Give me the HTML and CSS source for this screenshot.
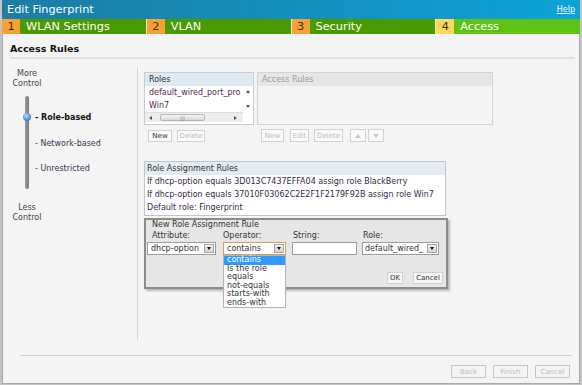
FILE: index.html
```html
<!DOCTYPE html>
<html lang="en">
<head>
    <meta charset="UTF-8">
    <title>Edit Fingerprint</title>
    <link rel="stylesheet" href="styles.css">
</head>
<body>

    <div class="window">
        <!-- Title bar -->
        <div class="titlebar">
            <span class="title">Edit Fingerprint</span>
            <a class="help" href="#">Help</a>
        </div>

        <!-- Wizard steps -->
        <div class="steps">
            <div class="step"><span class="num">1</span><span class="label">WLAN Settings</span></div>
            <div class="step"><span class="num">2</span><span class="label">VLAN</span></div>
            <div class="step"><span class="num">3</span><span class="label">Security</span></div>
            <div class="step active"><span class="num">4</span><span class="label">Access</span></div>
        </div>

        <div class="content">
            <h2 class="section-title">Access Rules</h2>

            <div class="main">
                <!-- Access level slider -->
                <div class="control">
                    <div class="ctl-label">More<br>Control</div>
                    <div class="slider">
                        <div class="track"><span class="knob"></span></div>
                        <ul class="levels">
                            <li class="current">- Role-based</li>
                            <li>- Network-based</li>
                            <li>- Unrestricted</li>
                        </ul>
                    </div>
                    <div class="ctl-label less">Less<br>Control</div>
                </div>

                <div class="rules">
                    <div class="top-row">
                        <div class="roles-col">
                            <div class="box roles-box">
                                <div class="box-head">Roles</div>
                                <div class="list-wrap">
                                    <ul class="list">
                                        <li>default_wired_port_pro</li>
                                        <li>Win7</li>
                                    </ul>
                                    <div class="vscroll">
                                        <span class="arr up"></span>
                                        <span class="arr down"></span>
                                    </div>
                                </div>
                                <div class="hscroll-row">
                                    <div class="hscroll">
                                        <span class="arr left"></span>
                                        <span class="thumb">|||</span>
                                        <span class="arr right"></span>
                                    </div>
                                    <div class="corner"></div>
                                </div>
                            </div>
                            <div class="btns">
                                <button class="btn w-new">New</button>
                                <button class="btn w-del" disabled>Delete</button>
                            </div>
                        </div>

                        <div class="access-col">
                            <div class="box access-box">
                                <div class="box-head">Access Rules</div>
                            </div>
                            <div class="btns access-btns">
                                <button class="btn w-new2" disabled>New</button>
                                <button class="btn w-edit" disabled>Edit</button>
                                <button class="btn w-del2" disabled>Delete</button>
                                <button class="btn w-arrow move-up" disabled><span class="tri-up"></span></button>
                                <button class="btn w-arrow" disabled><span class="tri-down"></span></button>
                            </div>
                        </div>
                    </div>

                    <div class="box assign-box">
                        <div class="box-head">Role Assignment Rules</div>
                        <ul class="rule-list">
                            <li>If dhcp-option equals 3D013C7437EFFA04 assign role BlackBerry</li>
                            <li>If dhcp-option equals 37010F03062C2E2F1F2179F92B assign role Win7</li>
                            <li>Default role: Fingerprint</li>
                        </ul>
                    </div>

                    <!-- New rule editor -->
                    <div class="new-rule">
                        <div class="nr-head">New Role Assignment Rule</div>
                        <div class="nr-fields">
                            <div class="field f-attr">
                                <label>Attribute:</label>
                                <div class="select"><span class="val">dhcp-option</span><span class="drop"></span></div>
                            </div>
                            <div class="field f-op">
                                <label>Operator:</label>
                                <div class="select focused"><span class="val">contains</span><span class="drop"></span></div>
                                <ul class="options">
                                    <li class="selected">contains</li>
                                    <li>Is the role</li>
                                    <li>equals</li>
                                    <li>not-equals</li>
                                    <li>starts-with</li>
                                    <li>ends-with</li>
                                </ul>
                            </div>
                            <div class="field f-str">
                                <label>String:</label>
                                <div class="text-input"></div>
                            </div>
                            <div class="field f-role">
                                <label>Role:</label>
                                <div class="select"><span class="val">default_wired_</span><span class="drop"></span></div>
                            </div>
                        </div>
                        <div class="nr-actions">
                            <button class="btn w-ok">OK</button>
                            <button class="btn w-cancel">Cancel</button>
                        </div>
                    </div>
                </div>
            </div>

            <div class="footer">
                <button class="btn fbtn" disabled>Back</button>
                <button class="btn fbtn" disabled>Finish</button>
                <button class="btn fbtn" disabled>Cancel</button>
            </div>
        </div>
    </div>

</body>
</html>
```

FILE: styles.css
```css
/* Base */
body {
    margin: 0;
    background: #c4c4c4;
    font-family: "DejaVu Sans", Verdana, sans-serif;
    font-size: 8px;
    color: #333;
}

ul {
    list-style: none;
    margin: 0;
    padding: 0;
}

.window {
    margin-left: 2px;
    width: 578px;
    height: 384px;
    display: flex;
    flex-direction: column;
    background: #f4f4f4;
}

/* Title bar */
.titlebar {
    height: 19px;
    flex-shrink: 0;
    display: flex;
    align-items: center;
    justify-content: space-between;
    padding: 0 5px 0 5px;
    background: linear-gradient(to right, #1c7da5, #0ca2d6);
    color: #fff;
}

.title {
    font-size: 11.3px;
}

.help {
    color: #fff;
    font-size: 8px;
    text-decoration: underline;
}

/* Steps */
.steps {
    height: 15px;
    flex-shrink: 0;
    display: flex;
    gap: 1px;
    background: #e3ecd8;
}

.step {
    flex: 1;
    display: flex;
    background: #4a9a02;
    color: #fff;
    font-size: 11.3px;
}

.step .num {
    width: 18px;
    display: flex;
    align-items: center;
    justify-content: center;
    background: #f6a132;
    color: #3a2a10;
}

.step .label {
    display: flex;
    align-items: center;
    padding-left: 6px;
}

.step.active {
    background: #5dc212;
}

.step.active .num {
    background: #ffd660;
}

/* Content */
.content {
    flex: 1;
    display: flex;
    flex-direction: column;
    padding: 0 4px 0 7px;
    border: 1px solid #a9a9a9;
    border-top: 0;
}

.section-title {
    margin: 0;
    padding: 8px 0 2px 0;
    font-size: 9.5px;
    line-height: 13px;
    color: #111;
    border-bottom: 2px solid #dce0e4;
}

.main {
    display: flex;
    height: 273px;
    margin-top: 8px;
}

/* Slider column */
.control {
    width: 127px;
    padding-top: 2px;
    border-right: 1px solid #d6d6d6;
}

.ctl-label {
    width: 34px;
    text-align: center;
    line-height: 10px;
    color: #444;
}

.ctl-label.less {
    margin-top: 14px;
}

.slider {
    display: flex;
    margin-top: 7px;
}

.track {
    position: relative;
    width: 4px;
    height: 93px;
    margin-left: 15px;
    border-radius: 2px;
    background: linear-gradient(to right, #999, #7a7a7a);
}

.knob {
    position: absolute;
    left: -2px;
    top: 17px;
    width: 8px;
    height: 8px;
    border-radius: 50%;
    background: radial-gradient(circle at 40% 35%, #b8dcff, #3f82d6 70%);
}

.levels {
    margin-left: 6px;
    padding-top: 16px;
}

.levels li {
    line-height: 11px;
    margin-bottom: 14.5px;
    color: #3f3350;
}

.levels li.current {
    font-weight: bold;
    color: #111;
}

/* Rules area */
.rules {
    flex: 1;
    padding: 5px 0 0 6px;
}

.top-row {
    display: flex;
    gap: 3px;
}

.box {
    box-sizing: border-box;
    border: 1px solid #c2ced8;
    background: #fff;
}

.box-head {
    height: 13px;
    line-height: 13px;
    padding-left: 4px;
    background: #dfe9f1;
}

.roles-box {
    width: 110px;
}

.list-wrap {
    display: flex;
    height: 26px;
}

.list {
    flex: 1;
    overflow: hidden;
    white-space: nowrap;
    padding-left: 4px;
}

.list li {
    line-height: 13px;
    color: #4b2850;
}

.vscroll {
    width: 10px;
    display: flex;
    flex-direction: column;
    justify-content: space-between;
    align-items: center;
    padding: 4px 0;
    box-sizing: border-box;
}

.arr {
    width: 0;
    height: 0;
    border: 2px solid transparent;
}

.arr.up { border-bottom: 3px solid #555; border-top: 0; }
.arr.down { border-top: 3px solid #555; border-bottom: 0; }
.arr.left { border-right: 3px solid #555; border-left: 0; }
.arr.right { border-left: 3px solid #555; border-right: 0; }

.hscroll-row {
    display: flex;
    height: 12px;
}

.hscroll {
    flex: 1;
    height: 9px;
    display: flex;
    align-items: center;
    padding: 0 4px;
    background: #ececec;
    border-top: 1px solid #ddd;
}

.hscroll .thumb {
    width: 45px;
    height: 7px;
    margin: 0 auto 0 8px;
    border: 1px solid #b8b8b8;
    border-radius: 2px;
    background: linear-gradient(#f4f4f4, #d8d8d8);
    font-size: 5px;
    line-height: 7px;
    text-align: center;
    color: #777;
    box-sizing: border-box;
}

.hscroll .arr.right {
    margin-right: 2px;
}

.corner {
    width: 10px;
}

.access-box {
    width: 236px;
    height: 53px;
    border-color: #d4d4d4;
    background: #f4f4f4;
}

.access-box .box-head {
    background: #e6e6e6;
    color: #9a9a9a;
}

/* Buttons */
.btn {
    height: 12px;
    padding: 0;
    font-family: "DejaVu Sans", Verdana, sans-serif;
    font-size: 7px;
    color: #333;
    background: #fafafa;
    border: 1px solid #d2d2d2;
    box-sizing: border-box;
}

.btn:disabled {
    color: #bcbcbc;
}

.btns {
    display: flex;
    gap: 5px;
    margin-top: 5px;
    padding-left: 4px;
}

.access-btns {
    margin-top: 4px;
    height: 13px;
}

.access-btns .btn {
    height: 13px;
}

.w-new { width: 24px; }
.w-del { width: 28px; }
.w-new2 { width: 23px; }
.w-edit { width: 19px; margin-left: 1px; }
.w-del2 { width: 29px; }
.w-arrow {
    width: 16px;
    display: flex;
    align-items: center;
    justify-content: center;
    margin-left: -3px;
}
.w-arrow.move-up { margin-left: 2px; }

.tri-up, .tri-down {
    width: 0;
    height: 0;
    border: 3px solid transparent;
}
.tri-up { border-bottom: 4px solid #c8c8c8; border-top: 0; }
.tri-down { border-top: 4px solid #c8c8c8; border-bottom: 0; }

/* Role assignment rules */
.assign-box {
    width: 302px;
    margin-top: 19px;
    border-color: #bcc7d0;
}

.assign-box .box-head {
    padding-left: 2px;
    background: #e4ebf1;
}

.rule-list {
    padding: 0 0 1px 2px;
}

.rule-list li {
    line-height: 13px;
    color: #35293f;
}

/* New rule editor */
.new-rule {
    width: 304px;
    margin-top: 2px;
    box-sizing: border-box;
    border: 2px solid #8c8c8c;
    background: #e6e6e6;
    box-shadow: 2px 2px 2px rgba(0, 0, 0, 0.25);
}

.nr-head {
    line-height: 10px;
    padding-left: 6px;
    color: #333;
}

.nr-fields {
    display: grid;
    grid-template-columns: 76px 69px 70px 80px;
    padding-left: 1px;
}

.field {
    position: relative;
}

.field label {
    display: block;
    line-height: 12px;
    padding-left: 1px;
}

.f-attr label {
    padding-left: 5px;
}

.f-op label {
    padding-left: 0;
}

.select,
.text-input {
    height: 13px;
    box-sizing: border-box;
    border: 1px solid #9c9c9c;
    background: #fff;
    display: flex;
    align-items: center;
}

.select .val {
    flex: 1;
    overflow: hidden;
    white-space: nowrap;
    padding-left: 3px;
}

.f-role .select .val {
    padding-left: 2px;
}

.select .drop {
    width: 10px;
    height: 9px;
    margin-right: 1px;
    border: 1px solid #a4a4a4;
    background: linear-gradient(#f0f0f0, #d4d4d4);
    box-sizing: border-box;
    display: flex;
    align-items: center;
    justify-content: center;
}

.select .drop::after {
    content: "";
    border: 2.5px solid transparent;
    border-top: 3px solid #111;
    border-bottom: 0;
}

.select.focused {
    border-color: #d0a058;
}

.f-attr .select { width: 69px; }
.f-op .select { width: 63px; }
.f-str .text-input { width: 65px; }
.f-role .select { width: 77px; }

.options {
    position: absolute;
    top: 100%;
    left: 0;
    width: 63px;
    box-sizing: border-box;
    border: 1px solid #a6b6c6;
    background: #fff;
    z-index: 2;
}

.options li {
    line-height: 8.5px;
    padding-left: 3px;
}

.options li.selected {
    background: #3399ff;
    color: #fff;
}

.nr-actions {
    display: flex;
    justify-content: flex-end;
    gap: 10px;
    margin-top: 17px;
    padding: 0 3px 3px 0;
}

.w-ok { width: 16px; height: 12px; background: #f6f6f6; }
.w-cancel { width: 30px; height: 12px; background: #f6f6f6; }

/* Footer */
.footer {
    display: flex;
    justify-content: flex-end;
    gap: 7px;
    margin: 15px 3px 0 10px;
    padding: 9px 2px 5px 0;
    border-top: 1px solid #cbd2d8;
}

.fbtn {
    width: 35px;
    height: 13px;
    background: #f4f4f4;
    border-color: #c6c6c6;
}
```
